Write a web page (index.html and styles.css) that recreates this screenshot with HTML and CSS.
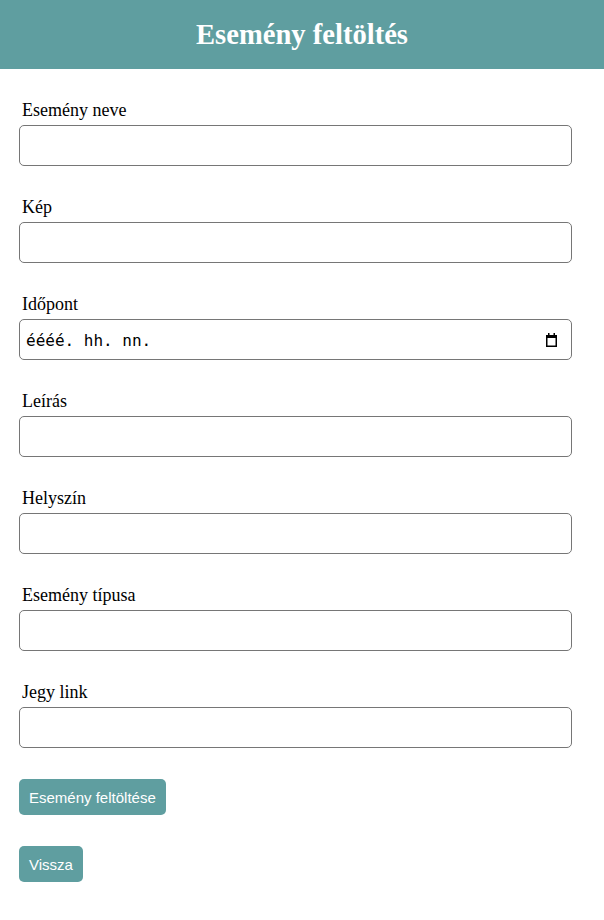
FILE: index.html
```html
<!DOCTYPE html>
<html lang="hu">
<head>
<meta charset="utf-8">
<title>Esemény feltöltés</title>
<link rel="stylesheet" href="styles.css">
</head>
<body>
<header class="top">
  <h1 class="title">Esemény feltöltés</h1>
</header>
<form class="form">
  <div class="field">
    <label class="label" for="nev">Esemény neve</label>
    <input class="input" id="nev" type="text">
  </div>
  <div class="field">
    <label class="label" for="kep">Kép</label>
    <input class="input" id="kep" type="text">
  </div>
  <div class="field">
    <label class="label" for="idopont">Időpont</label>
    <div class="input date">
      <span class="date-text">éééé. hh. nn.</span>
      <svg class="cal" width="11" height="14" viewBox="0 0 11 14">
        <rect x="0.75" y="2.75" width="9.5" height="10.5" fill="none" stroke="#000" stroke-width="1.5"/>
        <rect x="0" y="2" width="11" height="3" fill="#000"/>
        <rect x="2" y="0" width="1.5" height="3" fill="#000"/>
        <rect x="7.5" y="0" width="1.5" height="3" fill="#000"/>
      </svg>
    </div>
  </div>
  <div class="field">
    <label class="label" for="leiras">Leírás</label>
    <input class="input" id="leiras" type="text">
  </div>
  <div class="field">
    <label class="label" for="hely">Helyszín</label>
    <input class="input" id="hely" type="text">
  </div>
  <div class="field">
    <label class="label" for="tipus">Esemény típusa</label>
    <input class="input" id="tipus" type="text">
  </div>
  <div class="field">
    <label class="label" for="jegy">Jegy link</label>
    <input class="input" id="jegy" type="text">
  </div>
  <div class="actions">
    <button class="btn" type="button">Esemény feltöltése</button>
    <button class="btn" type="button">Vissza</button>
  </div>
</form>
</body>
</html>
```

FILE: styles.css
```css
html, body {
  margin: 0;
  padding: 0;
  background: #fff;
}

body {
  font-family: "Liberation Serif", "Times New Roman", serif;
  color: #000;
}

.top {
  background: #5f9ea0;
  height: 69px;
  display: flex;
  align-items: center;
  justify-content: center;
}

.title {
  margin: 0;
  color: #fff;
  font-size: 28.6px;
  font-weight: bold;
}

.form {
  display: flex;
  flex-direction: column;
  gap: 31px;
  padding: 31px 0 0 19px;
  width: 553px;
}

.field {
  display: flex;
  flex-direction: column;
  gap: 4px;
}

.label {
  font-size: 18px;
  line-height: 21px;
  padding-left: 3px;
}

.input {
  box-sizing: border-box;
  width: 553px;
  height: 41px;
  margin: 0;
  border: 1px solid #767676;
  border-radius: 5px;
  background: #fff;
  padding: 0 10px;
  font-size: 16px;
}

.date {
  display: flex;
  align-items: center;
  justify-content: space-between;
  padding: 1px 14px 0 6px;
}

.date-text {
  font-family: "DejaVu Sans Mono", monospace;
  font-size: 16px;
  color: #000;
}

.cal {
  display: block;
}

.actions {
  display: flex;
  flex-direction: column;
  align-items: flex-start;
  gap: 31px;
}

.btn {
  background: #5f9ea0;
  color: #fff;
  border: none;
  border-radius: 5px;
  height: 36px;
  padding: 0 10px;
  font-family: "Liberation Sans", Arial, sans-serif;
  font-size: 15px;
  cursor: pointer;
}
```
